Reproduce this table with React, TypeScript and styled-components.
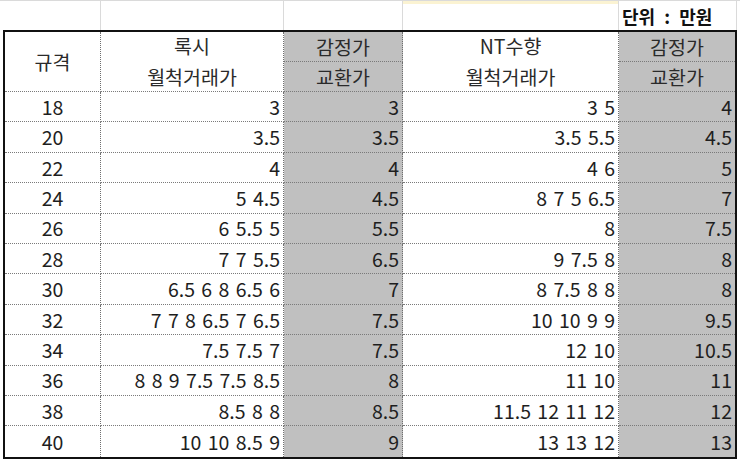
import React from "react";
import styled, { createGlobalStyle } from "styled-components";

const GlobalStyle = createGlobalStyle`
  html, body {
    margin: 0;
    padding: 0;
    background: #ffffff;
  }
  body {
    font-family: "Noto Sans CJK KR", "Noto Sans", sans-serif;
    color: #1e1e1e;
  }
`;

const COLS = "96px 183px 119px 216px 116px";

const Sheet = styled.div`
  width: 740px;
  height: 462px;
  overflow: hidden;
  background: #ffffff;
`;

const TopRow = styled.div`
  display: grid;
  grid-template-columns: 3px 98px 183px 119px 216px 118px;
  height: 30px;
  border-top: 1px solid #dadada;
  box-sizing: border-box;
`;

const TopCell = styled.div<{ $tint?: boolean }>`
  border-right: 1px solid #dadada;
  box-sizing: border-box;
  background: ${(p) =>
    p.$tint ? "linear-gradient(#fbf3d2 0 3px, #ffffff 3px)" : "#ffffff"};
  display: flex;
  align-items: center;
  justify-content: flex-start;
  padding-left: 3px;
`;

const UnitLabel = styled.span`
  font-size: 18px;
  font-weight: 700;
  color: #111;
  white-space: pre;
  word-spacing: 5px;
`;

const Table = styled.div`
  margin-left: 3px;
  width: 734px;
  border: 2px solid #111;
  box-sizing: border-box;
  display: grid;
  grid-template-columns: ${COLS};
  grid-template-rows: 29.6px 30.4px repeat(12, 30.4px);
`;

const Cell = styled.div<{
  $gray?: boolean;
  $align?: "center" | "right";
  $last?: boolean;
  $span?: number;
  $noBottom?: boolean;
}>`
  grid-row: ${(p) => (p.$span ? `span ${p.$span}` : "auto")};
  background: ${(p) => (p.$gray ? "#c0c0c0" : "#ffffff")};
  border-right: ${(p) => (p.$last ? "none" : "1px dotted #6e6e6e")};
  border-bottom: ${(p) => (p.$noBottom ? "none" : "1px dotted #7a7a7a")};
  box-sizing: border-box;
  display: flex;
  align-items: center;
  justify-content: ${(p) => (p.$align === "right" ? "flex-end" : "center")};
  padding-right: ${(p) => (p.$align === "right" ? "3px" : "0")};
  font-size: 19.5px;
  white-space: pre;
  word-spacing: 2px;
  line-height: 1;
`;

const HeadCell = styled(Cell)`
  flex-direction: column;
  justify-content: center;
  gap: 11px;
`;

const HeadText = styled.span`
  font-size: 19.5px;
  color: #2a2a2a;
  line-height: 1;
`;

const rows: [string, string, string, string, string][] = [
  ["18", "3", "3", "3 5", "4"],
  ["20", "3.5", "3.5", "3.5 5.5", "4.5"],
  ["22", "4", "4", "4 6", "5"],
  ["24", "5 4.5", "4.5", "8 7 5 6.5", "7"],
  ["26", "6 5.5 5", "5.5", "8", "7.5"],
  ["28", "7 7 5.5", "6.5", "9 7.5 8", "8"],
  ["30", "6.5 6 8 6.5 6", "7", "8 7.5 8 8", "8"],
  ["32", "7 7 8 6.5 7 6.5", "7.5", "10 10 9 9", "9.5"],
  ["34", "7.5 7.5 7", "7.5", "12 10", "10.5"],
  ["36", "8 8 9 7.5 7.5 8.5", "8", "11 10", "11"],
  ["38", "8.5 8 8", "8.5", "11.5 12 11 12", "12"],
  ["40", "10 10 8.5 9", "9", "13 13 12", "13"],
];

export default function App() {
  return (
    <Sheet>
      <GlobalStyle />
      <TopRow>
        <TopCell />
        <TopCell />
        <TopCell />
        <TopCell />
        <TopCell $tint />
        <TopCell>
          <UnitLabel>단위 : 만원</UnitLabel>
        </TopCell>
      </TopRow>
      <Table>
        <HeadCell $span={2}>
          <HeadText>규격</HeadText>
        </HeadCell>
        <HeadCell $span={2}>
          <HeadText>록시</HeadText>
          <HeadText>월척거래가</HeadText>
        </HeadCell>
        <Cell $gray>
          <HeadText>감정가</HeadText>
        </Cell>
        <HeadCell $span={2}>
          <HeadText>NT수향</HeadText>
          <HeadText>월척거래가</HeadText>
        </HeadCell>
        <Cell $gray $last>
          <HeadText>감정가</HeadText>
        </Cell>
        <Cell $gray>
          <HeadText>교환가</HeadText>
        </Cell>
        <Cell $gray $last>
          <HeadText>교환가</HeadText>
        </Cell>
        {rows.map((r, i) => {
          const last = i === rows.length - 1;
          return (
            <React.Fragment key={r[0]}>
              <Cell $noBottom={last}>{r[0]}</Cell>
              <Cell $align="right" $noBottom={last}>
                {r[1]}
              </Cell>
              <Cell $gray $align="right" $noBottom={last}>
                {r[2]}
              </Cell>
              <Cell $align="right" $noBottom={last}>
                {r[3]}
              </Cell>
              <Cell $gray $align="right" $last $noBottom={last}>
                {r[4]}
              </Cell>
            </React.Fragment>
          );
        })}
      </Table>
    </Sheet>
  );
}
